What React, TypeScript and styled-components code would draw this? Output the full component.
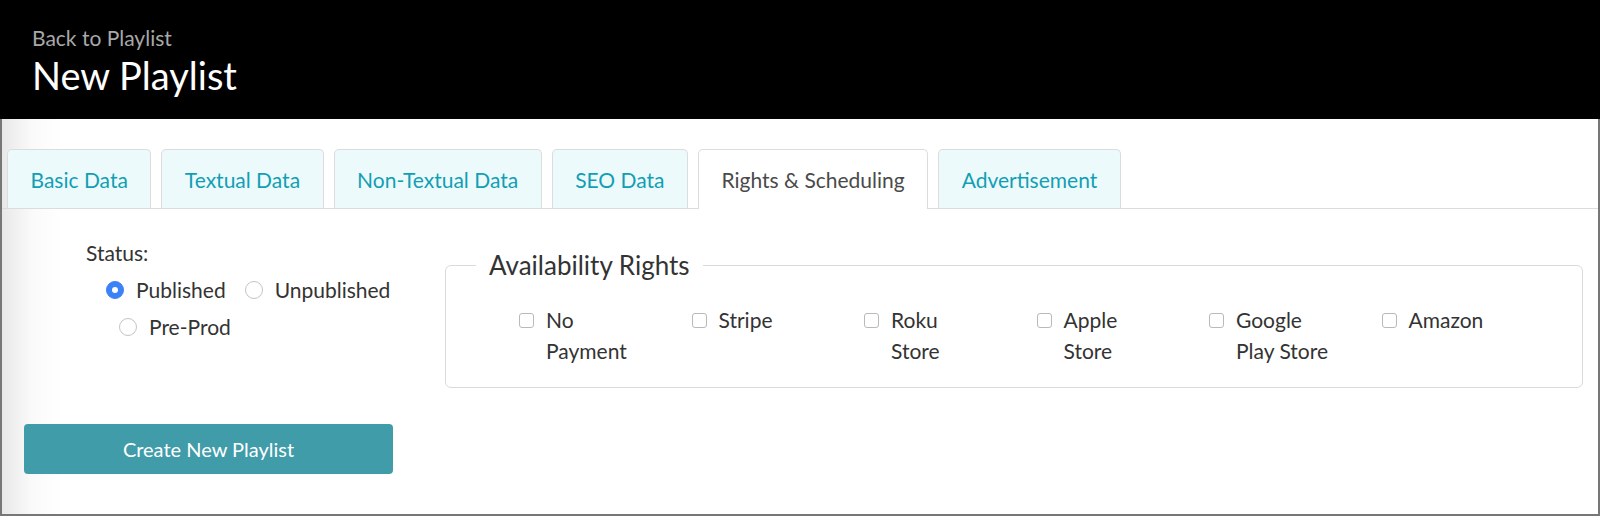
import React from "react";
import styled, { createGlobalStyle } from "styled-components";

const GlobalStyle = createGlobalStyle`
  html, body { margin: 0; padding: 0; background: #fff; }
  body { font-family: Lato, "Open Sans", sans-serif; color: #333; }
  * { box-sizing: border-box; }
`;

const Page = styled.div`
  width: 1600px;
  height: 516px;
  display: flex;
  flex-direction: column;
  overflow: hidden;
`;

const Header = styled.header`
  height: 119px;
  background: #000;
  padding: 24px 32px 0;
  display: flex;
  flex-direction: column;
`;

const BackLink = styled.a`
  font-size: 21px;
  line-height: 28px;
  color: #a8a8a8;
  text-decoration: none;
`;

const Title = styled.h1`
  margin: 0;
  font-size: 38px;
  line-height: 46px;
  font-weight: 400;
  color: #fff;
`;

const Frame = styled.div`
  flex: 1;
  border: 2px solid #777;
  border-top: none;
  background: linear-gradient(90deg, #e8e8e8 0px, #fafafa 30px, #fff 60px);
  display: flex;
  flex-direction: column;
`;

const TabBar = styled.nav`
  display: flex;
  gap: 10px;
  padding: 30px 0 0 5px;
  border-bottom: 1px solid #dcdcdc;
`;

const Tab = styled.div<{ $active?: boolean }>`
  height: ${(p) => (p.$active ? "60px" : "59px")};
  margin-bottom: ${(p) => (p.$active ? "-1px" : "0")};
  padding: 0 22.5px;
  display: flex;
  align-items: center;
  border: 1px solid #dcdcdc;
  border-bottom: none;
  border-radius: 5px 5px 0 0;
  background: ${(p) => (p.$active ? "#fff" : "#edfafc")};
  color: ${(p) => (p.$active ? "#4a4a4a" : "#129fb4")};
  font-size: 21px;
  white-space: nowrap;
`;

const Content = styled.div`
  padding: 0 15px 0 22px;
  display: flex;
  flex-direction: column;
`;

const Row = styled.div`
  display: flex;
  align-items: flex-start;
`;

const StatusColumn = styled.div`
  width: 421px;
  padding: 28px 0 0 62px;
  display: flex;
  flex-direction: column;
  gap: 6px;
`;

const FieldLabel = styled.div`
  font-size: 21px;
  line-height: 31px;
  color: #333;
`;

const RadioRow = styled.div<{ $indent: number }>`
  display: flex;
  gap: 19px;
  padding-left: ${(p) => p.$indent}px;
`;

const RadioOption = styled.label`
  display: flex;
  align-items: center;
  gap: 12px;
  font-size: 21px;
  line-height: 31px;
  color: #333;
`;

const RadioDot = styled.span<{ $checked?: boolean }>`
  width: 18px;
  height: 18px;
  border-radius: 50%;
  flex: none;
  background: ${(p) => (p.$checked ? "#3b82f6" : "#fff")};
  border: 1px solid ${(p) => (p.$checked ? "#3b82f6" : "#c4c4c4")};
  display: flex;
  align-items: center;
  justify-content: center;
  &::after {
    content: "";
    width: 6px;
    height: 6px;
    border-radius: 50%;
    background: #fff;
    display: ${(p) => (p.$checked ? "block" : "none")};
  }
`;

const Fieldset = styled.fieldset`
  flex: 1;
  margin: 41px 0 0;
  padding: 0 0 21px 30px;
  border: 1px solid #dadada;
  border-radius: 6px;
  min-width: 0;
`;

const Legend = styled.legend`
  padding: 0 13px;
  font-size: 26px;
  line-height: 31px;
  color: #333;
`;

const Items = styled.div`
  display: flex;
  padding: 23px 0 0 43px;
`;

const CheckItem = styled.label`
  width: 172.5px;
  flex: none;
  display: flex;
  align-items: flex-start;
  gap: 12px;
`;

const CheckBox = styled.span`
  width: 15px;
  height: 15px;
  margin-top: 9px;
  flex: none;
  border: 1px solid #b9b9b9;
  border-radius: 3px;
  background: #fff;
`;

const CheckText = styled.span`
  max-width: 97px;
  font-size: 21px;
  line-height: 31px;
  color: #333;
`;

const CreateButton = styled.button`
  margin-top: 36px;
  width: 369px;
  height: 50px;
  border: none;
  border-radius: 4px;
  background: #409ca9;
  color: #fff;
  font-family: Lato, "Open Sans", sans-serif;
  font-size: 20px;
  cursor: pointer;
`;

const tabs = [
  "Basic Data",
  "Textual Data",
  "Non-Textual Data",
  "SEO Data",
  "Rights & Scheduling",
  "Advertisement",
];

const rights = [
  "No Payment",
  "Stripe",
  "Roku Store",
  "Apple Store",
  "Google Play Store",
  "Amazon",
];

export default function App() {
  return (
    <Page>
      <GlobalStyle />
      <Header>
        <BackLink href="#">Back to Playlist</BackLink>
        <Title>New Playlist</Title>
      </Header>
      <Frame>
        <TabBar>
          {tabs.map((t) => (
            <Tab key={t} $active={t === "Rights & Scheduling"}>
              {t}
            </Tab>
          ))}
        </TabBar>
        <Content>
          <Row>
            <StatusColumn>
              <FieldLabel>Status:</FieldLabel>
              <RadioRow $indent={20}>
                <RadioOption>
                  <RadioDot $checked />
                  Published
                </RadioOption>
                <RadioOption>
                  <RadioDot />
                  Unpublished
                </RadioOption>
              </RadioRow>
              <RadioRow $indent={33}>
                <RadioOption>
                  <RadioDot />
                  Pre-Prod
                </RadioOption>
              </RadioRow>
            </StatusColumn>
            <Fieldset>
              <Legend>Availability Rights</Legend>
              <Items>
                {rights.map((r) => (
                  <CheckItem key={r}>
                    <CheckBox />
                    <CheckText>{r}</CheckText>
                  </CheckItem>
                ))}
              </Items>
            </Fieldset>
          </Row>
          <CreateButton>Create New Playlist</CreateButton>
        </Content>
      </Frame>
    </Page>
  );
}
